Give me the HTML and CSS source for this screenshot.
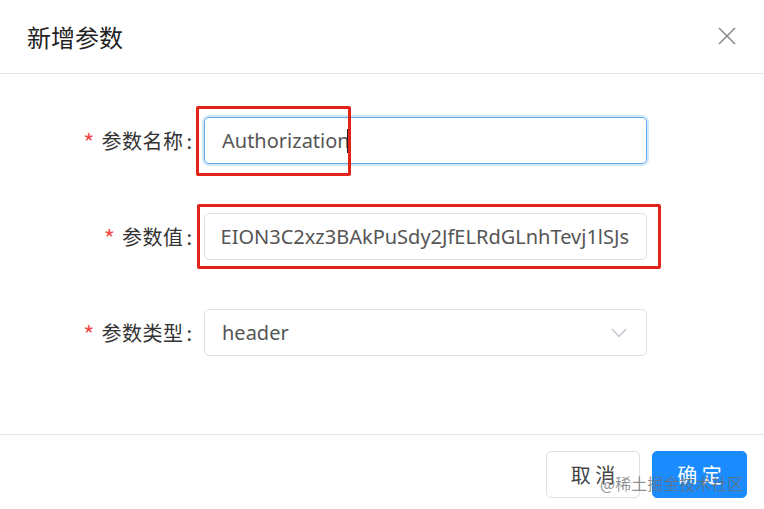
FILE: index.html
```html
<!DOCTYPE html>
<html lang="zh">
<head>
<meta charset="utf-8">
<link rel="stylesheet" href="styles.css">
</head>
<body>
<div class="dialog">
  <div class="dialog-header">
    <span class="dialog-title">新增参数</span>
    <svg class="close" width="18" height="18" viewBox="0 0 18 18"><path d="M1 1 L17 17 M17 1 L1 17" stroke="#8c8c8c" stroke-width="1.6" fill="none"/></svg>
  </div>
  <div class="dialog-body">
    <div class="form-row">
      <label class="form-label"><span class="req">*</span>参数名称<span class="colon">:</span></label>
      <div class="input focused"><span class="value">Authorization</span><span class="caret"></span></div>
    </div>
    <div class="form-row">
      <label class="form-label"><span class="req">*</span>参数值<span class="colon">:</span></label>
      <div class="input"><div class="clip"><span class="value">Bearer eyJhbGciOiJIUzI1NiJ9·EION3C2xz3BAkPuSdy2JfELRdGLnhTevj1lSJs</span></div></div>
    </div>
    <div class="form-row">
      <label class="form-label"><span class="req">*</span>参数类型<span class="colon">:</span></label>
      <div class="input select"><span class="value">header</span>
        <svg class="arrow" width="16" height="10" viewBox="0 0 16 10"><path d="M1 1 L8 8.5 L15 1" stroke="#c0c4cc" stroke-width="1.4" fill="none"/></svg>
      </div>
    </div>
  </div>
  <div class="dialog-footer">
    <button class="btn">取 消</button>
    <button class="btn primary">确 定</button>
  </div>
  <div class="mark mark-1"></div>
  <div class="mark mark-2"></div>
  <div class="watermark">@稀土掘金技术社区</div>
</div>
</body>
</html>
```
FILE: styles.css
```css
* { box-sizing: border-box; }
html, body { margin: 0; padding: 0; background: #fff; }
body {
  font-family: "Noto Sans", "Noto Sans CJK SC", sans-serif;
  width: 764px;
  height: 509px;
  overflow: hidden;
}
.dialog { position: relative; width: 764px; height: 509px; }
.dialog-header {
  height: 74px;
  border-bottom: 1px solid #e6e6e6;
  display: flex;
  align-items: center;
  justify-content: space-between;
  padding: 0 27px 0 27px;
}
.dialog-title {
  font-family: "Noto Sans CJK SC", sans-serif;
  font-size: 24px;
  color: #222;
  line-height: 1;
}
.close { margin-right: 1px; margin-top: -1px; }
.dialog-body {
  padding: 43px 0 0 0;
  height: 361px;
  border-bottom: 1px solid #e6e6e6;
  display: flex;
  flex-direction: column;
  gap: 49px;
}
.form-row { display: flex; align-items: center; height: 47px; }
.form-label {
  width: 204px;
  padding-right: 12px;
  text-align: right;
  font-family: "Noto Sans CJK SC", sans-serif;
  font-size: 20px;
  color: #333;
  line-height: 1;
  letter-spacing: 0.5px;
  padding-top: 3px;
}
.colon { margin-left: 3px; letter-spacing: 0; }
.req { color: #f04b4b; margin-right: 7px; font-size: 24px; vertical-align: -3px; letter-spacing: 0; }
.input {
  width: 443px;
  height: 47px;
  border: 1px solid #dcdfe6;
  border-radius: 5px;
  display: flex;
  align-items: center;
  padding: 0 17px;
  font-size: 20px;
  color: #555;
  overflow: hidden;
  white-space: nowrap;
}
.input.focused {
  border-color: #5ea7e8;
  box-shadow: 0 0 0 2px #d3e9fb;
}
.clip {
  flex: 1;
  overflow: hidden;
  display: flex;
  justify-content: flex-end;
  padding-right: 0;
}
.input .value { flex: none; }
.caret { width: 2px; height: 24px; background: #222; margin-left: -3px; }
.input.select { justify-content: space-between; padding-right: 19px; }
.dialog-footer {
  display: flex;
  justify-content: flex-end;
  gap: 12px;
  padding: 16px 17px 0 0;
}
.btn {
  width: 94px;
  height: 47px;
  border: 1px solid #dcdfe6;
  border-radius: 5px;
  background: #fff;
  font-family: "Noto Sans CJK SC", sans-serif;
  font-size: 20px;
  color: #444;
  padding: 0;
}
.btn.primary { background: #1a8cff; border-color: #1a8cff; color: #fff; width: 95px; }
.mark {
  position: absolute;
  border: 3px solid #e2231a;
  border-radius: 2px;
}
.mark-1 { left: 196px; top: 106px; width: 155px; height: 70px; }
.mark-2 { left: 197px; top: 204px; width: 464px; height: 65px; }
.watermark {
  position: absolute;
  left: 600px;
  top: 471px;
  font-family: "Noto Sans CJK SC", sans-serif;
  font-size: 16px;
  color: rgba(110, 110, 110, 0.75);
  white-space: nowrap;
}
```
